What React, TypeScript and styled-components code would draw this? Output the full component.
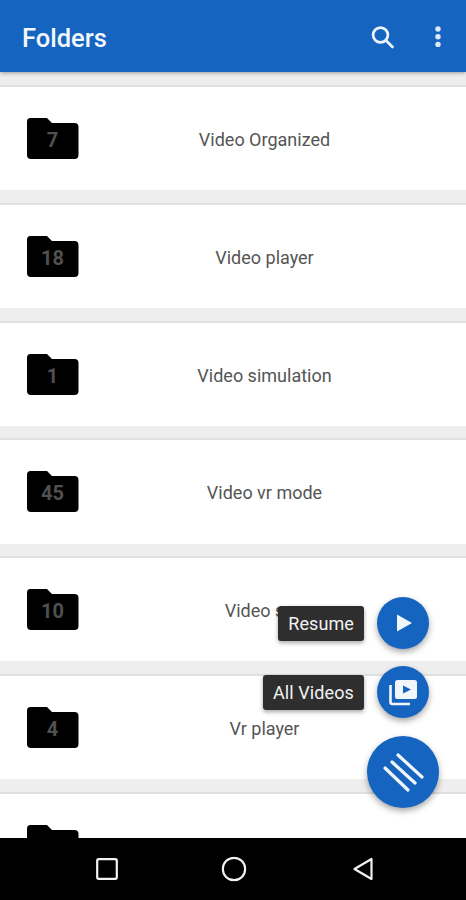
import React from 'react';
import styled, { createGlobalStyle } from 'styled-components';

const Global = createGlobalStyle`
  html, body { margin: 0; padding: 0; background: #eee; }
  * { box-sizing: border-box; }
`;
const Screen = styled.div`
  position: relative; width: 466px; height: 900px; display: flex; flex-direction: column;
  overflow: hidden; font-family: Roboto, "Liberation Sans", sans-serif; background: #eeeeee;
`;
const AppBar = styled.header`
  position: relative; z-index: 2; height: 72px; flex: none; background: #1565c0; display: flex; align-items: center;
  padding: 0 23.5px 0 22px; color: #fff; box-shadow: 0 1px 4px rgba(0,0,0,.35);
`;
const Title = styled.h1`
  margin: 5px 0 0; flex: 1; font-size: 25.5px; font-weight: 500; line-height: 1; color: #f4f8fc;
`;
const SearchIcon = styled.svg`
  display: block; fill: none; stroke: #eef4fb;
`;
const DotsIcon = styled.svg`
  display: block; fill: #dfeaf6;
`;
const BarActions = styled.div`
  display: flex; align-items: center; gap: 36.5px;
`;
const List = styled.main`
  flex: 1; min-height: 0; overflow: hidden; padding-top: 13px; display: flex; flex-direction: column; gap: 12.6px;
`;
const Row = styled.div`
  flex: none; height: 105.2px; background: #fff; border-top: 2px solid #e0e0e0; display: flex; align-items: center; padding: 0 15px 0 26.5px;
`;
const FolderBox = styled.div`
  position: relative; width: 52px; height: 41px; flex: none; display: flex; align-items: center; justify-content: center;
`;
const FolderShape = styled.svg`
  position: absolute; inset: 0; display: block;
`;
const Count = styled.span`
  position: relative; top: 1.5px; font-size: 20px; font-weight: 700; color: #505050; line-height: 1;
`;
const Name = styled.span`
  flex: 1; text-align: center; font-size: 18px; color: #555555; margin-top: 2px; margin-left: -0.5px;
`;
const FabStack = styled.div`
  position: absolute; right: 27px; bottom: 92px; display: flex; flex-direction: column; align-items: flex-end; z-index: 3;
`;
const SmallItem = styled.div<{ $gap: number }>`
  display: flex; align-items: center; margin-right: 10px; margin-bottom: ${p => p.$gap}px;
`;
const Label = styled.div`
  height: 35px; display: flex; align-items: center; padding: 0 10px; background: #2e2e2e; color: #f2f2f2;
  font-size: 18px; letter-spacing: 0.1px; border-radius: 3px; box-shadow: 0 2px 4px rgba(0,0,0,.35); margin-right: 13px;
`;
const Fab = styled.div<{ $size: number }>`
  width: ${p => p.$size}px; height: ${p => p.$size}px; border-radius: 50%; background: #1565c0; flex: none;
  display: flex; align-items: center; justify-content: center; box-shadow: 0 3px 6px rgba(0,0,0,.35);
`;
const NavBar = styled.nav`
  position: relative; z-index: 2; height: 62px; flex: none; background: #000; display: flex; align-items: center;
`;
const NavSlot = styled.div<{ $x: number }>`
  position: absolute; left: ${p => p.$x}px; top: 50%; transform: translate(-50%, -50%); display: flex;
`;

const rows = [
  ['7', 'Video Organized'], ['18', 'Video player'], ['1', 'Video simulation'],
  ['45', 'Video vr mode'], ['10', 'Video sun'], ['4', 'Vr player'], ['', ''],
];

export default function App() {
  return (
    <Screen>
      <Global />
      <AppBar>
        <Title>Folders</Title>
        <BarActions>
          <SearchIcon width="26" height="28" viewBox="0 0 26 28" strokeWidth="2.7">
            <circle cx="10.5" cy="13" r="7.4" />
            <path d="M16 18.5 L22.5 25" strokeLinecap="round" />
          </SearchIcon>
          <DotsIcon width="10" height="24" viewBox="0 0 10 24">
            <circle cx="5" cy="5" r="2.7" />
            <circle cx="5" cy="12.8" r="2.7" />
            <circle cx="5" cy="20.4" r="2.7" />
          </DotsIcon>
        </BarActions>
      </AppBar>
      <List>
        {rows.map(([n, name], i) => (
          <Row key={i}>
            <FolderBox>
              <FolderShape width="52" height="41" viewBox="0 0 52 41">
                <path d="M3.5 0 H20 L25 5 H47.5 a4 4 0 0 1 4 4 V37 a4 4 0 0 1 -4 4 H4 a4 4 0 0 1 -4 -4 V3.5 a3.5 3.5 0 0 1 3.5 -3.5 Z" fill="#000" />
              </FolderShape>
              <Count>{n}</Count>
            </FolderBox>
            <Name>{name}</Name>
          </Row>
        ))}
      </List>
      <FabStack>
        <SmallItem $gap={17}>
          <Label>Resume</Label>
          <Fab $size={52}>
            <svg width="18" height="18" viewBox="0 0 18 18"><path d="M3 0.5 L18 9 L3 17.5 Z" fill="#f2f6fb" /></svg>
          </Fab>
        </SmallItem>
        <SmallItem $gap={18}>
          <Label>All Videos</Label>
          <Fab $size={52}>
            <svg width="28" height="28" viewBox="0 0 28 28">
              <path d="M1.5 7 V24 a2 2 0 0 0 2 2 H21" fill="none" stroke="#f2f6fb" strokeWidth="2.6" />
              <rect x="6" y="2" width="22" height="19" rx="2.5" fill="#f2f6fb" />
              <path d="M14 7.5 L22 11.5 L14 15.5 Z" fill="#1565c0" />
            </svg>
          </Fab>
        </SmallItem>
        <Fab $size={72}>
          <svg width="44" height="44" viewBox="0 0 44 44" stroke="#f2f6fb" strokeWidth="3.2" strokeLinecap="round">
            <path d="M4 18 L27 40" />
            <path d="M11 12 L34 33" />
            <path d="M17 5 L41 27" />
          </svg>
        </Fab>
      </FabStack>
      <NavBar>
        <NavSlot $x={106.7}>
          <svg width="22" height="22" viewBox="0 0 22 22"><rect x="1.2" y="1.2" width="19.6" height="19.6" rx="1.5" fill="none" stroke="#f2f2f2" strokeWidth="2.2" /></svg>
        </NavSlot>
        <NavSlot $x={233.6}>
          <svg width="25" height="25" viewBox="0 0 25 25"><circle cx="12.5" cy="12.5" r="11.2" fill="none" stroke="#f2f2f2" strokeWidth="2.2" /></svg>
        </NavSlot>
        <NavSlot $x={363}>
          <svg width="22" height="24" viewBox="0 0 22 24"><path d="M19.5 2 V22 L2.5 12 Z" fill="none" stroke="#f2f2f2" strokeWidth="2.2" strokeLinejoin="round" /></svg>
        </NavSlot>
      </NavBar>
    </Screen>
  );
}
